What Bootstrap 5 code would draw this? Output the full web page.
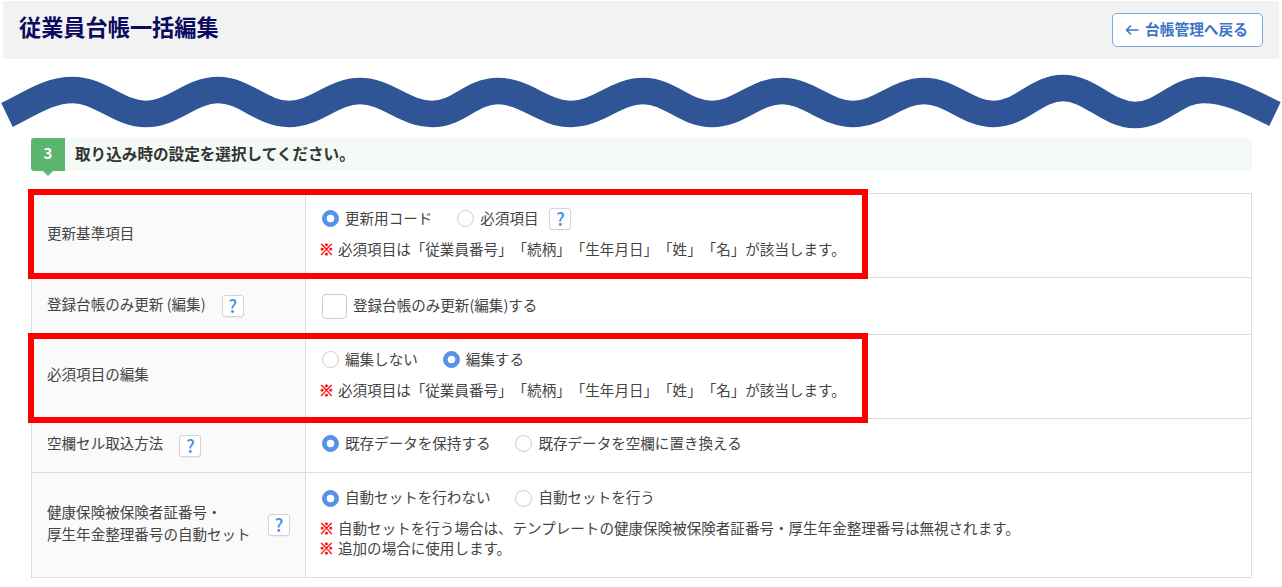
<!DOCTYPE html>
<html lang="ja">
<head>
<meta charset="utf-8">
<title>従業員台帳一括編集</title>
<link href="https://cdn.jsdelivr.net/npm/bootstrap@5.3.0/dist/css/bootstrap.min.css" rel="stylesheet">
<style>
html,body{overflow:hidden}
body{width:1282px;height:587px;background:#fff;color:#444;font-family:"Noto Sans CJK JP","Liberation Sans",sans-serif;font-size:14.55px;line-height:1.5;text-spacing-trim:space-all}
.page-head{margin:1px 3px 0;height:58px;background:#f2f2f2;padding:0 16px}
.page-title{font-size:22.2px;font-weight:700;color:#0a0a5e;margin:0 0 7px}
.back-btn{width:151px;height:34px;border:1px solid #7ea6e0;border-radius:5px;background:#fff;color:#3d74c5;font-size:14.7px;font-weight:700;padding:0 2px 2px 0;gap:6px}
.back-btn:hover{background:#fff;color:#3d74c5;border-color:#7ea6e0}
.back-btn svg{margin-top:2px}
.wave{display:block;width:1282px;height:62px;margin-top:11px}
.sheet{position:relative;margin:6px 30px 0 31px;width:1221px}
.step-bar{height:33px;background:#f3f9f4;border-radius:5px;font-size:15.6px;font-weight:700;color:#333;gap:10px}
.step-text{padding-bottom:2px}
.step-no{position:relative;width:34px;height:33px;background:#5cb56f;color:#fff;font-size:15px;border-radius:3px 0 0 3px;padding-bottom:2px}
.step-no::after{content:"";position:absolute;left:12px;top:33px;border:5px solid transparent;border-top-color:#5cb56f;border-bottom:0}
.set-table{margin:22px 0 0;width:1221px;table-layout:fixed;border-color:#ddd;--bs-table-color:#444}
.set-table th,.set-table td{vertical-align:middle;border:1px solid #ddd;font-weight:400;line-height:1.5;font-size:14.55px}
.set-table th{width:274px;padding:0 15px;background:#fafafa}
.set-table td{padding:0 16px 4px;background:#fff}
.set-table td.plain-cell{padding-bottom:0}
.lbl{display:block;padding-bottom:5px}
.r1{height:84px}.r2{height:57px}.r3{height:84px}.r4{height:54px}.r5{height:105px}
.set-line{height:22px}
.set-line>span:not(.help-tip){padding-bottom:2px}
.set-line .form-check-input{width:17px;height:17px;margin:0 6px 0 0;border:1px solid #ccc;float:none;flex:none;box-shadow:none;opacity:1}
.set-line .opt-next{margin-left:25px}
.set-line .form-check-input:checked{background-color:#5693e6;border-color:#5693e6}
.set-line .form-check-input[type=checkbox]{width:25px;height:25px;border-radius:4px;background-image:none;background-color:#fff}
.set-line>.check-text{padding-bottom:4px}
.help-tip{display:inline-flex;align-items:center;justify-content:center;width:22px;height:22px;flex:none;border:1px solid #d4d4d4;border-radius:3px;background:#fff;color:#4a90e2;font-size:18px;font-weight:500;line-height:1;box-shadow:0 1px 1px rgba(0,0,0,.05);padding-bottom:2px}
.tip-gap{margin-left:11px}
.note-line{margin:0 0 0 -2px;height:20px;line-height:18px;white-space:nowrap}
.note-mark{color:#f00;font-weight:700;font-size:15px;-webkit-text-stroke:.5px #f00;display:inline-block;width:16px;margin-left:-1px;margin-right:3px}
.note-first{margin-top:10px}
.mark-box{position:absolute;left:-3px;width:840px;border:6px solid #f00;pointer-events:none;background:transparent}
.mark-a{top:51px;height:90px}
.mark-b{top:195px;height:90px}
</style>
</head>
<body>
<header class="page-head d-flex align-items-center justify-content-between">
  <h1 class="page-title">従業員台帳一括編集</h1>
  <a href="#" class="btn back-btn d-inline-flex align-items-center justify-content-center">
    <svg width="14" height="12" viewBox="0 0 14 12" fill="none" stroke="#3d74c5" stroke-width="1.6" aria-hidden="true"><path d="M13.5 6H1.5M6 1.5 1.5 6 6 10.5"/></svg>
    <span>台帳管理へ戻る</span>
  </a>
</header>
<svg class="wave" viewBox="0 70 1282 62" aria-hidden="true">
  <path d="M7 115C30 104 48 90 73 90C100 90 119 114 146 114C173 114 191 90 218 90C245 90 262 114 289 114C316 114 333 91 360 91C387 91 405 114 432 114C459 114 471 91 498 91C525 91 544 114 571 114C598 114 616 91 643 91C670 91 685 114 712 114C739 114 755 91 782 91C809 91 826 114 853 114C880 114 897 91 924 91C951 91 967 114 994 114C1021 114 1036 88 1063 88C1090 88 1108 115 1135 115C1162 115 1176 90 1203 90C1230 90 1252 103 1275 114" fill="none" stroke="#2f5597" stroke-width="26.5"/>
</svg>
<main class="sheet">
  <div class="step-bar d-flex align-items-center">
    <div class="step-no d-flex align-items-center justify-content-center">3</div>
    <div class="step-text">取り込み時の設定を選択してください。</div>
  </div>
  <table class="table set-table">
    <tbody>
      <tr class="r1">
        <th scope="row"><span class="lbl">更新基準項目</span></th>
        <td>
          <div class="set-line d-flex align-items-center">
            <input class="form-check-input" type="radio" name="a" checked><span>更新用コード</span>
            <input class="form-check-input opt-next" type="radio" name="a"><span>必須項目</span>
            <span class="help-tip tip-gap">?</span>
          </div>
          <p class="note-line note-first"><span class="note-mark">※</span>必須項目は「従業員番号」「続柄」「生年月日」「姓」「名」が該当します。</p>
        </td>
      </tr>
      <tr class="r2">
        <th scope="row"><div class="d-flex align-items-center"><span class="lbl">登録台帳のみ更新 (編集)</span><span class="help-tip ms-3">?</span></div></th>
        <td class="plain-cell">
          <div class="set-line d-flex align-items-center">
            <input class="form-check-input" type="checkbox"><span class="check-text">登録台帳のみ更新(編集)する</span>
          </div>
        </td>
      </tr>
      <tr class="r3">
        <th scope="row"><span class="lbl">必須項目の編集</span></th>
        <td>
          <div class="set-line d-flex align-items-center">
            <input class="form-check-input" type="radio" name="b"><span>編集しない</span>
            <input class="form-check-input opt-next" type="radio" name="b" checked><span>編集する</span>
          </div>
          <p class="note-line note-first"><span class="note-mark">※</span>必須項目は「従業員番号」「続柄」「生年月日」「姓」「名」が該当します。</p>
        </td>
      </tr>
      <tr class="r4">
        <th scope="row"><div class="d-flex align-items-center"><span class="lbl">空欄セル取込方法</span><span class="help-tip ms-3">?</span></div></th>
        <td>
          <div class="set-line d-flex align-items-center">
            <input class="form-check-input" type="radio" name="c" checked><span>既存データを保持する</span>
            <input class="form-check-input opt-next" type="radio" name="c"><span>既存データを空欄に置き換える</span>
          </div>
        </td>
      </tr>
      <tr class="r5">
        <th scope="row"><div class="d-flex align-items-center justify-content-between"><span class="lbl">健康保険被保険者証番号・<br>厚生年金整理番号の自動セット</span><span class="help-tip">?</span></div></th>
        <td>
          <div class="set-line d-flex align-items-center">
            <input class="form-check-input" type="radio" name="d" checked><span>自動セットを行わない</span>
            <input class="form-check-input opt-next" type="radio" name="d"><span>自動セットを行う</span>
          </div>
          <p class="note-line note-first"><span class="note-mark">※</span>自動セットを行う場合は、テンプレートの健康保険被保険者証番号・厚生年金整理番号は無視されます。</p>
          <p class="note-line"><span class="note-mark">※</span>追加の場合に使用します。</p>
        </td>
      </tr>
    </tbody>
  </table>
  <div class="mark-box mark-a"></div>
  <div class="mark-box mark-b"></div>
</main>
<script src="https://cdn.jsdelivr.net/npm/bootstrap@5.3.0/dist/js/bootstrap.bundle.min.js"></script>
</body>
</html>
